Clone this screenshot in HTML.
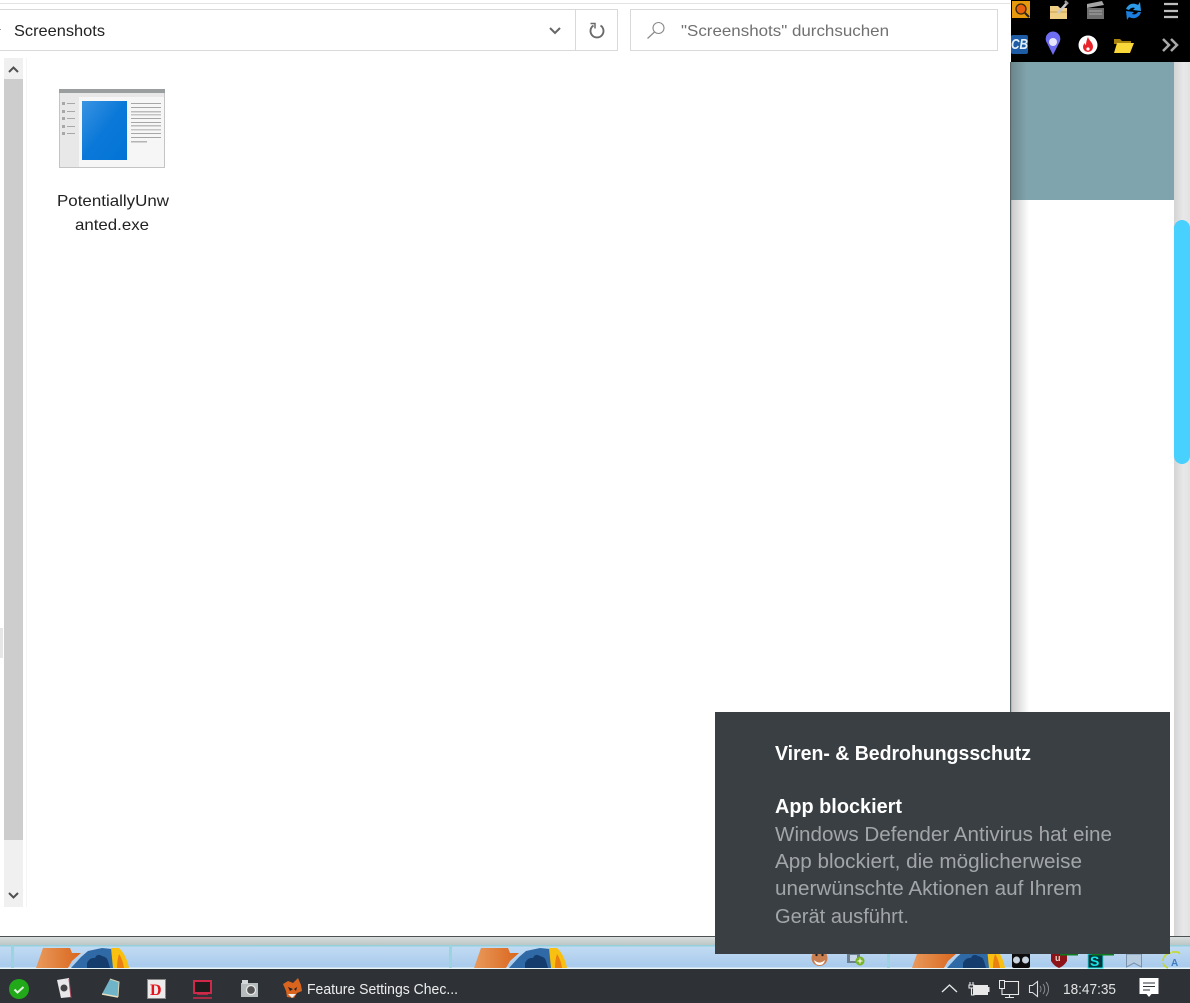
<!DOCTYPE html>
<html lang="de"><head><meta charset="utf-8"><title>Screenshots</title>
<style>html,body{margin:0;padding:0;background:#fff;width:1190px;height:1003px;overflow:hidden}svg{display:block}text{font-family:"Liberation Sans",sans-serif}</style></head>
<body>
<svg width="1190" height="1003" viewBox="0 0 1190 1003" xmlns="http://www.w3.org/2000/svg">
<defs>
<linearGradient id="shadow" x1="0" x2="1" y1="0" y2="0"><stop offset="0" stop-color="#c8c8c8"/><stop offset="1" stop-color="#fff"/></linearGradient>
<linearGradient id="shadowT" x1="0" x2="1" y1="0" y2="0"><stop offset="0" stop-color="#5b6d72"/><stop offset="1" stop-color="#80a4ad"/></linearGradient>
<linearGradient id="track" x1="0" x2="1" y1="0" y2="0"><stop offset="0" stop-color="#d4d4d4"/><stop offset=".6" stop-color="#e8e8e8"/><stop offset="1" stop-color="#e2e2e2"/></linearGradient>
<linearGradient id="blue" x1="0" x2="1" y1="0" y2="1"><stop offset="0" stop-color="#3a93e2"/><stop offset=".5" stop-color="#0a78d8"/><stop offset="1" stop-color="#0274d6"/></linearGradient>
<linearGradient id="strip" x1="0" x2="0" y1="0" y2="1"><stop offset="0" stop-color="#d8dcdc"/><stop offset="1" stop-color="#bcc6c6"/></linearGradient>
<linearGradient id="sky" x1="0" x2="0" y1="0" y2="1"><stop offset="0" stop-color="#c3dcf3"/><stop offset="1" stop-color="#a6c9ec"/></linearGradient>
<linearGradient id="orange" x1="0" x2="1" y1="0" y2="0"><stop offset="0" stop-color="#e99a5c"/><stop offset="1" stop-color="#d9651c"/></linearGradient>
<g id="art">
<path d="M36 968 L43 948 H70 L72 953 H81 L72 961 L68 968Z" fill="url(#orange)"/>
<path d="M71 968 L81 957 L88 951 L102 948 L112 949 L115 968Z" fill="#2f6aa6"/>
<path d="M87 963 q3 -6 8 -5 q2 -5 7 -2 q5 1 6 5 l2 7 H87Z" fill="#143d6e"/>
<path d="M111 948 L119 948 Q126 954 129 968 H113 Z" fill="#f8c010"/>
<path d="M117 968 q0 -8 2 -14 q4 6 5 14Z" fill="#ea7f12"/>
</g>
</defs>

<!-- page behind -->
<rect x="1011" y="62" width="179" height="880" fill="#fff"/>
<rect x="1011" y="62" width="163" height="138" fill="#80a4ad"/>
<rect x="1011" y="62" width="16" height="138" fill="url(#shadowT)" opacity=".55"/>
<rect x="1011" y="200" width="18" height="740" fill="url(#shadow)"/>
<rect x="1174" y="62" width="16" height="880" fill="url(#track)"/>
<rect x="1174" y="220" width="16" height="244" rx="8" fill="#48d0ff"/>

<!-- toolbar -->
<rect x="1011" y="0" width="179" height="62" fill="#000"/>
<g>
<rect x="1012" y="1" width="18" height="17" fill="#e69a0c"/>
<circle cx="1021" cy="9" r="5" fill="#e9610f" stroke="#3a2a12" stroke-width="1.3"/>
<path d="M1025 13l4 4" stroke="#222" stroke-width="2"/>
<path d="M1050 6h8l2 2h7v11h-17z" fill="#f0cf84"/><path d="M1050 12h17" stroke="#caa050"/>
<path d="M1058 13l9-10" stroke="#c8c8c8" stroke-width="2.5"/><path d="M1065 1l3 3" stroke="#999" stroke-width="2.4"/>
<rect x="1087" y="8" width="17" height="11" fill="#6f6f6f"/><path d="M1087 4l15-3 2 4-17 3z" fill="#a5a5a5"/><path d="M1089 11h13M1089 14h13" stroke="#aaa"/>
<path d="M1126 9a8 8 0 0 1 12-4l2-3 1 9-8-1 2-2a5 5 0 0 0-6 2z" fill="#2c9ae8"/>
<path d="M1141 12a8 8 0 0 1-12 5l-2 3-1-9 8 1-2 2a5 5 0 0 0 6-2z" fill="#1a7fe0"/>
<path d="M1164 4h14M1164 11h14M1164 17h14" stroke="#bdbdbd" stroke-width="2.2"/>
<rect x="1011" y="35" width="17" height="19" rx="2" fill="#1e5da6"/>
<text x="1011" y="49" font-size="15" font-weight="700" font-style="italic" fill="#e4eef8" textLength="17" lengthAdjust="spacingAndGlyphs">CB</text>
<path d="M1053 55l-6-12a7.300 7.300 0 1 1 12 0z" fill="#6f6ef2"/><circle cx="1053" cy="42" r="4" fill="#e6e6fa"/>
<circle cx="1088" cy="45" r="9.500" fill="#fff"/>
<path d="M1088 37c1 4 5 5 5 10a5 5 0 0 1-10 0c0-2 1-3 2-4 0 2 1 2 1 2 0-3 1-6 2-8z" fill="#e8232a"/><circle cx="1088" cy="49" r="1.600" fill="#fff"/>
<path d="M1114 39h6l2 2h9v3h-17z" fill="#a8820e"/><path d="M1114 53l3-10h17l-4 10z" fill="#fbd83a"/>
<path d="M1163 39l6 6-6 6M1171 39l6 6-6 6" fill="none" stroke="#a8a8a8" stroke-width="2.500"/>
</g>

<!-- explorer window -->
<rect x="0" y="0" width="1010" height="936" fill="#fff"/>
<rect x="1010" y="62" width="1.200" height="876" fill="#5a666a"/>
<rect x="0" y="3" width="1010" height="1" fill="#e3e3e3"/>
<path d="M-1 9.500H617.500V50.500H-1Z" fill="#fff" stroke="#d9d9d9"/>
<path d="M575.500 9v42" stroke="#d9d9d9"/>
<path d="M0 29.500h1" stroke="#999"/>
<text x="14" y="36" font-size="16" fill="#222" textLength="91" lengthAdjust="spacingAndGlyphs">Screenshots</text>
<path d="M550 28l5 5 5-5" fill="none" stroke="#666" stroke-width="2"/>
<path d="M593.500 25.500a6.500 6.500 0 1 0 7 0" fill="none" stroke="#6a6a6a" stroke-width="1.900"/>
<path d="M590.500 23.500h4.500v5" fill="none" stroke="#6a6a6a" stroke-width="1.500"/>
<path d="M630.500 9.500H997.500V50.500H630.500Z" fill="#fff" stroke="#d9d9d9"/>
<circle cx="658.500" cy="28" r="5.500" fill="none" stroke="#8a8a8a" stroke-width="1.100"/>
<path d="M654.500 32l-7 6.500" stroke="#8a8a8a" stroke-width="1.200"/>
<text x="681" y="36" font-size="16" fill="#707070" textLength="208" lengthAdjust="spacingAndGlyphs">"Screenshots" durchsuchen</text>

<!-- left scrollbar -->
<rect x="4" y="58" width="19" height="849" fill="#f0f0f0"/>
<rect x="4" y="79" width="19" height="761" fill="#cdcdcd"/>
<path d="M26.500 58v849" stroke="#f5f5f5"/>
<path d="M9 72l4.500-4.500L18 72" fill="none" stroke="#505050" stroke-width="2"/>
<path d="M9 893l4.500 4.500L18 893" fill="none" stroke="#505050" stroke-width="2"/>
<rect x="0" y="628" width="3" height="30" fill="#e6e6e6"/>

<!-- file icon -->
<rect x="59.500" y="89.500" width="105" height="78" fill="#f6f6f6" stroke="#c4c4c4"/>
<rect x="59" y="89" width="106" height="4" fill="#9a9e9e"/>
<rect x="60" y="93" width="104" height="4" fill="#e8e8e8"/>
<rect x="60" y="97" width="19" height="70" fill="#e8e8e8"/>
<rect x="82" y="101" width="45" height="59" fill="url(#blue)"/>
<g fill="#a8a8a8"><rect x="62" y="102" width="3" height="3"/><rect x="62" y="110" width="3" height="3"/><rect x="62" y="117" width="3" height="3"/><rect x="62" y="125" width="3" height="3"/><rect x="62" y="132" width="3" height="3"/>
<rect x="67" y="103" width="8" height="1"/><rect x="67" y="111" width="8" height="1"/><rect x="67" y="118" width="8" height="1"/><rect x="67" y="126" width="8" height="1"/><rect x="67" y="133" width="8" height="1"/></g>
<g fill="#a6a6a6"><rect x="131" y="103" width="30" height="1"/><rect x="131" y="107" width="30" height="1"/><rect x="131" y="111" width="30" height="1.500" fill="#bbb"/><rect x="131" y="114" width="30" height="1.500" fill="#c4c4c4"/><rect x="131" y="118" width="30" height="1"/><rect x="131" y="122" width="30" height="1"/><rect x="131" y="125" width="30" height="1.500" fill="#bbb"/><rect x="131" y="129" width="30" height="1.500" fill="#c4c4c4"/><rect x="131" y="133" width="30" height="1"/><rect x="131" y="137" width="30" height="1"/><rect x="131" y="141" width="16" height="1.500" fill="#b4b4b4"/></g>
<text x="57" y="206" font-size="16" fill="#222" textLength="112" lengthAdjust="spacingAndGlyphs">PotentiallyUnw</text>
<text x="75" y="230" font-size="16" fill="#222" textLength="74" lengthAdjust="spacingAndGlyphs">anted.exe</text>

<!-- desktop strip -->
<rect x="0" y="936" width="1190" height="1.500" fill="#4d5152"/>
<rect x="0" y="937" width="1190" height="8" fill="url(#strip)"/>
<rect x="0" y="945" width="1190" height="24" fill="url(#sky)"/>
<rect x="0" y="945" width="1190" height="1.500" fill="#94cfdc"/>
<rect x="0" y="967.500" width="1190" height="1.500" fill="#e8f6f8"/>
<g fill="#9bd3de"><rect x="11" y="945" width="3" height="23"/><rect x="449" y="945" width="3" height="23"/><rect x="887" y="945" width="3" height="23"/></g>
<use href="#art"/><use href="#art" x="438"/><use href="#art" x="876"/>
<!-- strip icons -->
<circle cx="819.500" cy="958" r="8" fill="#c97e50"/><path d="M814 960q5.500 5 11 0q-1 5-5.500 5t-5.500-5z" fill="#fff"/><circle cx="816.500" cy="955" r="1.200" fill="#222"/><circle cx="822.500" cy="955" r="1.200" fill="#222"/>
<rect x="847" y="953" width="13" height="10" fill="#6b7f8f"/><rect x="850" y="955" width="7" height="6" fill="#c8d8e8"/>
<circle cx="860" cy="961" r="4.500" fill="#7ab42a"/><path d="M857.500 961h5M860 958.500v5" stroke="#fff"/>
<rect x="1012" y="950" width="18" height="18" rx="2" fill="#0c0c0c"/><circle cx="1016.500" cy="960" r="3.500" fill="#c8d4e0"/><circle cx="1025.500" cy="960" r="3.500" fill="#c8d4e0"/>
<path d="M1051 953h16v8q-3 5-8 7q-5-2-8-7z" fill="#8c1418"/><text x="1055" y="961" font-size="9" font-weight="700" fill="#e8d8c8">u</text>
<rect x="1060" y="953" width="18" height="2.500" fill="#0d7a1e"/>
<rect x="1088" y="954" width="15" height="14" fill="#04343c" stroke="#16e6e6"/><text x="1090" y="966" font-size="14" font-weight="700" fill="#16e6e6">S</text>
<rect x="1092" y="953" width="22" height="2.500" fill="#0d7a1e"/>
<path d="M1126.500 954h15v13l-7.500-4-7.500 4z" fill="#b8cce0" stroke="#7a92ac"/>
<path d="M1163 961a8 8 0 0 1 8-8" fill="none" stroke="#c4d820" stroke-width="1.500"/><path d="M1168 968a8 8 0 0 1-5-5" fill="none" stroke="#c4d820" stroke-width="1.500"/>
<text x="1171" y="966" font-size="10" font-weight="700" fill="#3f7cc0">A</text>
<path d="M1172 952h6l2 2" fill="none" stroke="#c4d820" stroke-width="1.500"/>

<!-- taskbar -->
<rect x="0" y="969" width="1190" height="34" fill="#2e3237"/>
<circle cx="19" cy="989" r="10" fill="#21a91a"/>
<path d="M14.500 989.500l3 3 6-5.500" fill="none" stroke="#dff5dc" stroke-width="2"/>
<path d="M57 980l12-2 2 19-10 1z" fill="#e8e8ea"/><circle cx="64" cy="988" r="3.500" fill="#444"/><path d="M69 979l2 19" stroke="#a84a5a"/>
<path d="M102 994l8-15 9 3-1 15z" fill="#6fb4c8"/><path d="M102 994l16 3" stroke="#e6dfc0" stroke-width="1.500"/><path d="M110 979l9 3-1 15" fill="none" stroke="#d8d4b8"/>
<rect x="147.500" y="979.500" width="18" height="19" fill="#ececec" stroke="#888"/>
<text x="150" y="995" font-size="16" font-weight="700" fill="#e4141c" style="font-family:'Liberation Serif',serif">D</text>
<rect x="194" y="981" width="17" height="12" fill="#1d1d1d" stroke="#d02848" stroke-width="2"/>
<path d="M197 994h11M193 998h19" stroke="#d02848" stroke-width="1.500"/>
<rect x="241" y="983" width="17" height="14" fill="#b6bcbc"/><rect x="242" y="980" width="6" height="4" fill="#d4d8d8"/>
<circle cx="251" cy="990" r="4.500" fill="#555" stroke="#e8e8e8" stroke-width="1.300"/>
<path d="M283 984l5-3 5 2 5-5 3 7 1 6-5 2-3 5-7-1-1-6z" fill="#d9641e"/><path d="M288 987l5 2-3 2zM297 987l-3 2 2 2z" fill="#222"/><path d="M288 994h8l-4 4z" fill="#eee"/>
<text x="307" y="994" font-size="15" fill="#ededed" textLength="151" lengthAdjust="spacingAndGlyphs">Feature Settings Chec...</text>

<path d="M942 992l7.500-7 7.500 7" fill="none" stroke="#e8e8e8" stroke-width="1.300"/>
<rect x="973.500" y="985.500" width="14" height="9" fill="#e8e8e8" stroke="#e8e8e8"/>
<rect x="988" y="987" width="1.500" height="5" fill="#e8e8e8"/>
<path d="M970 982v3M973 982v3M969 985h5v3h-5zM971.500 988v7h3" fill="none" stroke="#e8e8e8" stroke-width="1.100"/>
<path d="M1004.500 981.500h14v13h-14" fill="none" stroke="#e8e8e8" stroke-width="1.100"/>
<rect x="999.500" y="980.500" width="5" height="8" fill="none" stroke="#e8e8e8" stroke-width="1"/>
<path d="M1002 988.500v6h3M1009.500 994.500v3M1005 997.500h9" fill="none" stroke="#e8e8e8" stroke-width="1.100"/>
<path d="M1029.500 985.500h3l5-4v15l-5-4h-3z" fill="none" stroke="#e0e0e0" stroke-width="1.100"/>
<path d="M1040 986a5 5 0 0 1 0 6M1043 984a8 8 0 0 1 0 10M1046 982a11 11 0 0 1 0 14" fill="none" stroke="#8a8d90" stroke-width="1"/>
<text x="1063" y="994" font-size="14.500" fill="#e2e2e2" textLength="53" lengthAdjust="spacingAndGlyphs">18:47:35</text>
<path d="M1139.500 978h19v16h-7l-2.500 3-2.500-3h-7z" fill="#fff"/>
<path d="M1143 983h12M1143 986.500h12M1143 990h7" stroke="#2e3237" stroke-width="1.100"/>

<!-- toast -->
<rect x="715" y="712" width="455" height="242" fill="#393f43"/>
<text x="775" y="760" font-size="20" font-weight="700" fill="#fff" textLength="256" lengthAdjust="spacingAndGlyphs">Viren- &amp; Bedrohungsschutz</text>
<text x="775" y="813" font-size="20" font-weight="700" fill="#fff" textLength="127" lengthAdjust="spacingAndGlyphs">App blockiert</text>
<g font-size="20" fill="#a3a6a8">
<text x="775" y="841" textLength="337" lengthAdjust="spacingAndGlyphs">Windows Defender Antivirus hat eine</text>
<text x="775" y="868" textLength="307" lengthAdjust="spacingAndGlyphs">App blockiert, die möglicherweise</text>
<text x="775" y="895" textLength="307" lengthAdjust="spacingAndGlyphs">unerwünschte Aktionen auf Ihrem</text>
<text x="775" y="923" textLength="134" lengthAdjust="spacingAndGlyphs">Gerät ausführt.</text>
</g>
</svg>
</body></html>
